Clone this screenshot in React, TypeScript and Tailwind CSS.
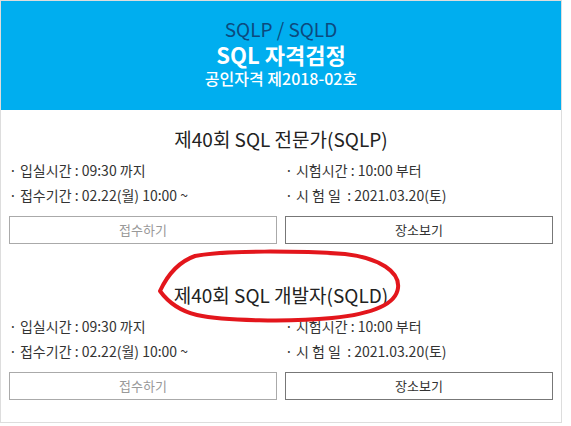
import React from "react";

const font = { fontFamily: '"Noto Sans CJK KR", "Noto Sans", sans-serif' };

type Exam = {
  title: string;
  left: string[];
  right: string[];
};

const exams: Exam[] = [
  {
    title: "제40회 SQL 전문가(SQLP)",
    left: ["· 입실시간 : 09:30 까지", "· 접수기간 : 02.22(월) 10:00 ~"],
    right: ["· 시험시간 : 10:00 부터", "· 시 험 일  : 2021.03.20(토)"],
  },
  {
    title: "제40회 SQL 개발자(SQLD)",
    left: ["· 입실시간 : 09:30 까지", "· 접수기간 : 02.22(월) 10:00 ~"],
    right: ["· 시험시간 : 10:00 부터", "· 시 험 일  : 2021.03.20(토)"],
  },
];

function Section({ exam, first }: { exam: Exam; first: boolean }) {
  return (
    <div className={first ? "pt-[17px]" : "pt-[39px]"}>
      <div className="text-center text-[19px] leading-[24px] text-[#222]">{exam.title}</div>
      <div className="mt-[7px] grid grid-cols-2 gap-x-2 text-[14px] leading-[25px] text-[#333]">
        <div>
          {exam.left.map((t) => (
            <div key={t} className="whitespace-pre">{t}</div>
          ))}
        </div>
        <div>
          {exam.right.map((t) => (
            <div key={t} className="whitespace-pre">{t}</div>
          ))}
        </div>
      </div>
      <div className="mt-[8px] grid grid-cols-2 gap-x-2">
        <div className="flex h-[28px] items-center justify-center border border-[#aaa] text-[13px] text-[#999]">
          접수하기
        </div>
        <div className="flex h-[28px] items-center justify-center border border-[#777] text-[13px] text-[#333]">
          장소보기
        </div>
      </div>
    </div>
  );
}

export default function App() {
  return (
    <div className="relative h-[426px] w-[571px] bg-white" style={font}>
      <div className="box-border h-[423px] w-[562px] border border-[#ddd] bg-white">
        <div className="flex h-[109px] flex-col items-center bg-[#00aeef] pt-[16px] text-center">
          <div className="text-[19px] leading-[24px] text-[#0c4a7e]">SQLP / SQLD</div>
          <div className="text-[22px] font-bold leading-[26px] text-white">SQL 자격검정</div>
          <div className="text-[16px] font-medium leading-[22px] text-white">공인자격 제2018-02호</div>
        </div>
        <div className="px-2">
          {exams.map((e, i) => (
            <Section key={e.title} exam={e} first={i === 0} />
          ))}
        </div>
      </div>
      <svg
        className="pointer-events-none absolute left-0 top-0"
        width="571"
        height="426"
        viewBox="0 0 571 426"
      >
        <path
          d="M 160 291 C 167 276, 178 262, 195 256 C 225 250, 300 251, 345 254 C 380 258, 400 272, 398 288 C 396 304, 372 314, 332 318 C 290 322, 225 321, 197 315 C 180 311, 168 302, 160 291 Z"
          fill="none"
          stroke="#e3161c"
          strokeWidth="4"
          strokeLinejoin="round"
        />
      </svg>
    </div>
  );
}
